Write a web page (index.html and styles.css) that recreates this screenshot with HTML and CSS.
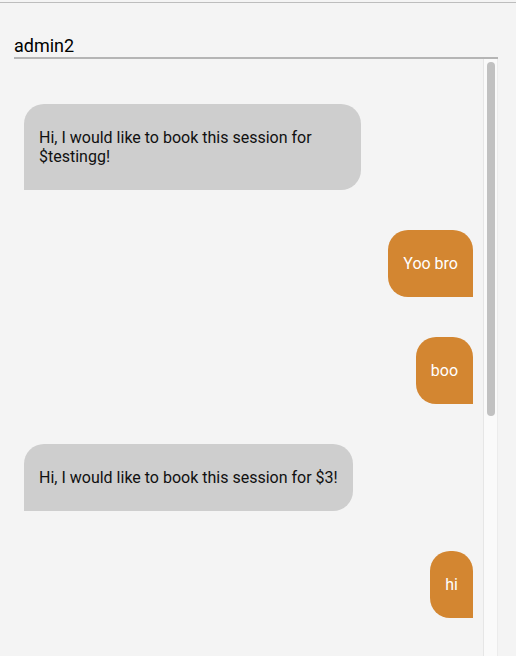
FILE: index.html
```html
<!DOCTYPE html>
<html lang="en">
<head>
<meta charset="utf-8">
<title>admin2</title>
<link rel="stylesheet" href="styles.css">
</head>
<body>
<div class="app">
  <div class="chat">
    <div class="chat-header">admin2</div>
    <div class="chat-body">
      <div class="messages">
        <div class="row row-in"><div class="bubble bubble-in">Hi, I would like to book this session for $testingg!</div></div>
        <div class="row row-out"><div class="bubble bubble-out">Yoo bro</div></div>
        <div class="row row-out"><div class="bubble bubble-out">boo</div></div>
        <div class="row row-in"><div class="bubble bubble-in">Hi, I would like to book this session for $3!</div></div>
        <div class="row row-out"><div class="bubble bubble-out">hi</div></div>
      </div>
      <div class="scrollbar" aria-hidden="true"><div class="scrollbar-thumb"></div></div>
    </div>
  </div>
</div>
</body>
</html>
```

FILE: styles.css
```css
html, body {
  margin: 0;
  padding: 0;
  height: 100%;
  overflow: hidden;
  background: #f4f4f4;
}

body {
  font-family: Roboto, "Liberation Sans", Arial, sans-serif;
  color: #111;
}

.app {
  margin-top: 2px;
  border-top: 1px solid #bdbdbd;
  height: calc(100% - 3px);
}

.chat {
  margin: 0 18px 0 14px;
  display: flex;
  flex-direction: column;
  height: 100%;
}

.chat-header {
  padding: 32px 0 1px 0;
  font-size: 18px;
  line-height: 21px;
  color: #000;
  border-bottom: 2px solid #b5b5b5;
}

.chat-body {
  flex: 1;
  display: flex;
  min-height: 0;
}

.messages {
  flex: 1;
  min-width: 0;
  overflow: hidden;
  padding-top: 5px;
}

.scrollbar {
  width: 13px;
  flex: none;
  background: #fafafa;
  border-left: 1px solid #e6e6e6;
  border-right: 1px solid #ececec;
}

.scrollbar-thumb {
  margin: 3px 2px 0 3px;
  height: 354px;
  background: #c1c1c1;
  border-radius: 4px;
}

.row {
  display: flex;
  padding: 0 10px;
  margin-top: 40px;
}

.row-in {
  justify-content: flex-start;
}

.row-out {
  justify-content: flex-end;
}

.bubble {
  box-sizing: border-box;
  max-width: 75%;
  padding: 24px 15px;
  font-size: 16px;
  line-height: 19px;
  border-radius: 20px;
}

.bubble-in {
  background: #cecece;
  color: #111;
  border-bottom-left-radius: 0;
}

.bubble-out {
  background: #d38631;
  color: #fff;
  border-bottom-right-radius: 0;
}
```
